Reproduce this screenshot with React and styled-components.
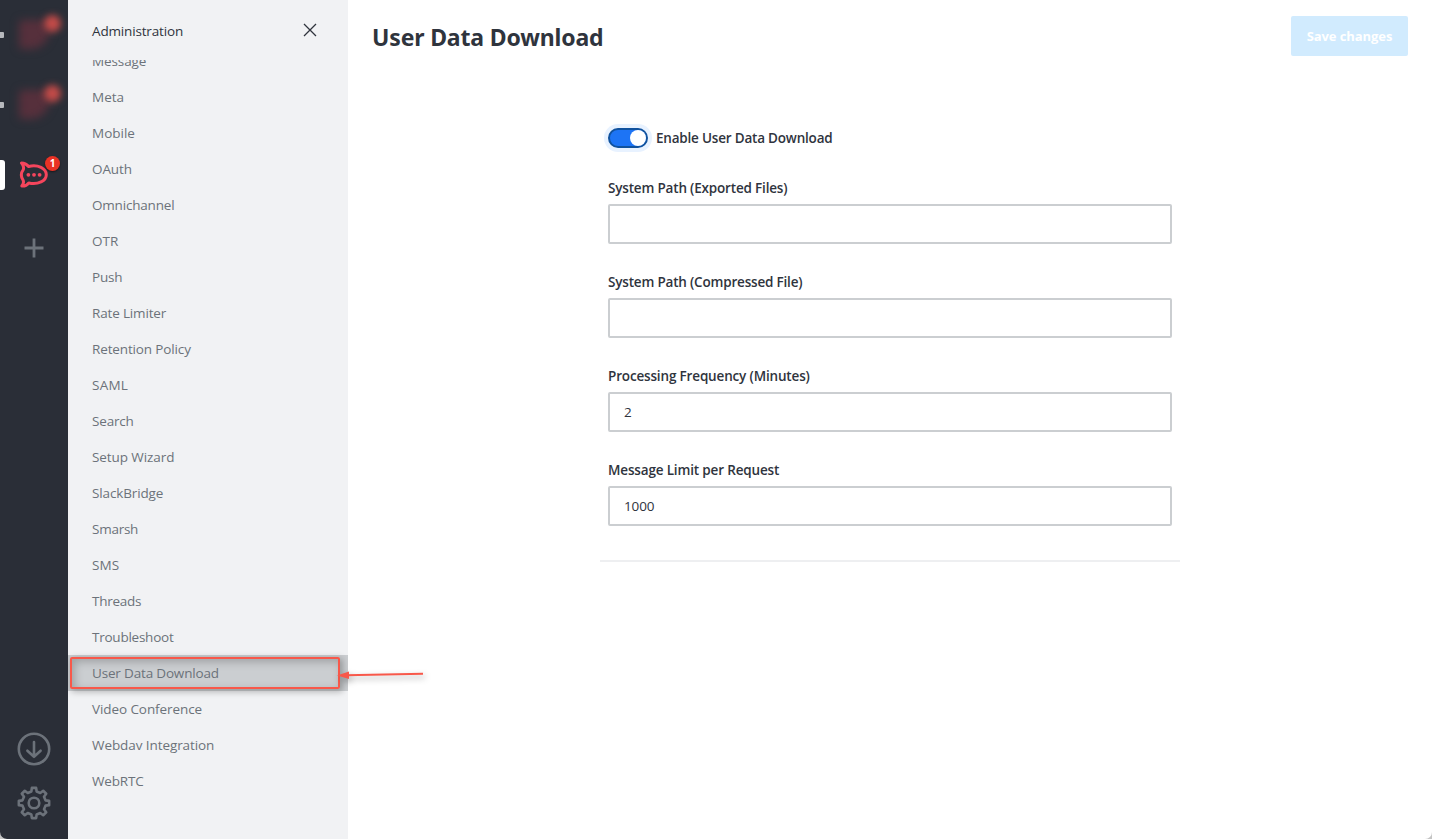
import React from 'react';
import styled, { createGlobalStyle } from 'styled-components';

const GlobalStyle = createGlobalStyle`
  *, *::before, *::after { box-sizing: border-box; }
  body { margin: 0; background: #c4c4c4; overflow: hidden; }
`;

const Window = styled.div`
  display: flex;
  width: 1432px;
  height: 839px;
  overflow: hidden;
  position: relative;
  border-radius: 0 0 7px 7px;
  background: #fff;
  font-family: 'Open Sans', 'Noto Sans', sans-serif;
  font-size: 13.5px;
  color: #2f343d;
`;

const Rail = styled.nav`
  display: flex;
  flex-direction: column;
  width: 68px;
  flex: none;
  background: #2a2e37;
`;

const Server = styled.div`
  position: relative;
  display: flex;
  align-items: center;
  justify-content: center;
  height: 70px;
`;

const Marker = styled.span`
  position: absolute;
  left: 0;
  top: ${(p) => (p.$active ? '20px' : '32px')};
  width: ${(p) => (p.$active ? '5px' : '4px')};
  height: ${(p) => (p.$active ? '30px' : '6px')};
  border-radius: ${(p) => (p.$active ? '0 3px 3px 0' : '0 1px 1px 0')};
  background: ${(p) => (p.$active ? '#fff' : '#b6b8bc')};
`;

const BlurredLogo = styled.span`
  position: absolute;
  left: 19px;
  top: 20px;
  width: 31px;
  height: 29px;
  border-radius: 4px 8px 20px 4px;
  background: #56303c;
  filter: blur(4px);
`;

const BlurredBadge = styled.span`
  position: absolute;
  left: 44px;
  top: 15px;
  width: 17px;
  height: 17px;
  border-radius: 50%;
  background: #c44b48;
  filter: blur(3.5px);
`;

const Badge = styled.span`
  position: absolute;
  left: 45px;
  top: 16px;
  width: 15px;
  height: 15px;
  border-radius: 50%;
  background: #e93225;
  color: #fff;
  font-size: 10px;
  font-weight: 700;
  line-height: 15px;
  text-align: center;
  box-shadow: 0 1px 2px rgba(0, 0, 0, 0.5);
`;

const RailButton = styled.button`
  display: flex;
  align-items: center;
  justify-content: center;
  width: 68px;
  height: 54px;
  padding: 0;
  border: 0;
  background: none;
  color: #6c727a;
`;

const AddButton = styled(RailButton)`
  height: 76px;
`;

const RailFooter = styled.div`
  display: flex;
  flex-direction: column;
  margin-top: auto;
  padding-bottom: 9px;
`;

const Sidebar = styled.aside`
  display: flex;
  flex-direction: column;
  width: 280px;
  flex: none;
  background: #f1f2f4;
`;

const SidebarHeader = styled.header`
  display: flex;
  align-items: center;
  justify-content: space-between;
  height: 60px;
  flex: none;
  padding: 2px 30px 0 24px;
`;

const Text = styled.span`
  letter-spacing: ${(p) => p.$spacing || 0}px;
  white-space: nowrap;
`;

const CloseButton = styled.button`
  display: flex;
  padding: 0;
  margin-top: -2px;
  border: 0;
  background: none;
  color: #2f343d;
`;

const ListViewport = styled.div`
  flex: 1;
  min-height: 0;
  overflow: hidden;
`;

const List = styled.ul`
  margin: -17px 0 0;
  padding: 0;
  list-style: none;
`;

const Item = styled.li`
  position: relative;
  display: flex;
  align-items: center;
  height: 36px;
  padding: 0 24px;
  color: #6c727a;
  background: ${(p) => (p.$selected ? '#cbced1' : 'transparent')};
`;

const Highlight = styled.span`
  position: absolute;
  left: 2px;
  top: 2px;
  width: 270px;
  height: 32px;
  border: 2px solid #f8584a;
  border-radius: 2px;
  box-shadow: 2px 2px 6px 1px rgba(0, 0, 0, 0.25), inset 3px 3px 8px rgba(0, 0, 0, 0.22);
`;

const Arrow = styled.svg`
  position: absolute;
  left: 336px;
  top: 660px;
  filter: drop-shadow(2px 3px 3px rgba(0, 0, 0, 0.35));
`;

const Main = styled.main`
  flex: 1;
  display: flex;
  flex-direction: column;
`;

const PageHeader = styled.header`
  display: flex;
  align-items: flex-start;
  justify-content: space-between;
  height: 124px;
  padding: 16px 24px 0;
`;

const Title = styled.h1`
  margin: 5px 0 0;
  font-family: 'Noto Sans', sans-serif;
  font-size: 23px;
  line-height: 32px;
  font-weight: 700;
  letter-spacing: ${(p) => p.$spacing}px;
  white-space: nowrap;
`;

const SaveButton = styled.button`
  width: 117px;
  height: 40px;
  padding: 0;
  border: 0;
  border-radius: 2px;
  background: #d1ebfe;
  color: #fff;
  font: 700 13px/20px 'Open Sans', sans-serif;
  letter-spacing: -0.07px;
  white-space: nowrap;
`;

const Form = styled.form`
  width: 580px;
  height: 438px;
  align-self: center;
  padding: 0 8px;
  border-bottom: 2px solid #eeeff1;
`;

const ToggleRow = styled.div`
  display: flex;
  align-items: center;
  gap: 8px;
  height: 28px;
  margin-bottom: 26px;
  font-weight: 600;
`;

const Toggle = styled.span`
  display: flex;
  justify-content: flex-end;
  align-items: center;
  width: 40px;
  height: 20px;
  border-radius: 10px;
  border: 2px solid #10529e;
  background: #1d74f5;
  box-shadow: 0 0 0 4px #e8f2ff;
`;

const Knob = styled.span`
  width: 16px;
  height: 16px;
  border-radius: 50%;
  background: #fff;
`;

const Field = styled.div`
  display: flex;
  flex-direction: column;
  height: 94px;
`;

const Label = styled.label`
  height: 26px;
  line-height: 20px;
  font-weight: 600;
`;

const Input = styled.div`
  display: flex;
  align-items: center;
  height: 40px;
  padding: 0 14px;
  border: 2px solid #cbced1;
  border-radius: 2px;
`;

const items = [
  ['Message', -0.1], ['Meta', 0], ['Mobile', 0], ['OAuth', -0.1], ['Omnichannel', -0.19],
  ['OTR', 0], ['Push', -0.2], ['Rate Limiter', -0.16], ['Retention Policy', -0.14],
  ['SAML', 0.25], ['Search', -0.17], ['Setup Wizard', -0.08], ['SlackBridge', -0.14],
  ['Smarsh', -0.25], ['SMS', 0.1], ['Threads', -0.25], ['Troubleshoot', -0.24],
  ['User Data Download', -0.17], ['Video Conference', -0.08],
  ['Webdav Integration', -0.08], ['WebRTC', -0.17],
];

const fields = [
  ['System Path (Exported Files)', '', -0.18],
  ['System Path (Compressed File)', '', -0.19],
  ['Processing Frequency (Minutes)', '2', -0.16],
  ['Message Limit per Request', '1000', -0.16],
];

const gearPoints = Array.from({ length: 8 }, (_, i) =>
  [[-13, 11.8], [-8, 15.3], [8, 15.3], [13, 11.8]].map(([a, r]) => {
    const t = ((i * 45 + a) * Math.PI) / 180;
    return `${(17 + r * Math.sin(t)).toFixed(2)},${(17 - r * Math.cos(t)).toFixed(2)}`;
  }).join(' ')
).join(' ');

const RocketLogo = () => (
  <svg width="30" height="28" viewBox="0 0 30 28" fill="none" stroke="#f5455c">
    <path d="M2.5 2C5.8 2 8 3.600 9.600 5.500C19 3.200 27.300 7.500 27.300 13.700C27.300 19.800 19 24 9.800 22C8 24.200 5.600 25.300 2.800 25C4.700 22.800 5 21 4 19C2 15.900 2 11.700 4.300 8.700C5 6.300 4.600 4.300 2.500 2Z" strokeWidth="3" strokeLinejoin="round" />
    <g fill="#f5455c" stroke="none">
      <circle cx="9.4" cy="13.8" r="1.9" /><circle cx="15" cy="13.8" r="1.9" /><circle cx="20.6" cy="13.8" r="1.9" />
    </g>
  </svg>
);

export default function App() {
  return (
    <>
      <GlobalStyle />
      <Window>
        <Rail>
          <Server><Marker /><BlurredLogo /><BlurredBadge /></Server>
          <Server><Marker /><BlurredLogo /><BlurredBadge /></Server>
          <Server><Marker $active /><RocketLogo /><Badge>1</Badge></Server>
          <AddButton aria-label="Add server">
            <svg width="20" height="20" stroke="currentColor" strokeWidth="2.8"><path d="M10 .5V19.5M.5 10H19.5" /></svg>
          </AddButton>
          <RailFooter>
            <RailButton aria-label="Downloads">
              <svg width="34" height="34" fill="none" stroke="currentColor" strokeWidth="2.6" strokeLinecap="round" strokeLinejoin="round">
                <circle cx="17" cy="17" r="15.2" /><path d="M17 10V24.800M10.400 18.700L17 24.800L23.600 18.700" />
              </svg>
            </RailButton>
            <RailButton aria-label="Settings">
              <svg width="34" height="34" fill="none" stroke="currentColor" strokeWidth="2.6" strokeLinejoin="round">
                <polygon points={gearPoints} /><circle cx="17" cy="17" r="5.3" />
              </svg>
            </RailButton>
          </RailFooter>
        </Rail>
        <Sidebar>
          <SidebarHeader>
            <Text $spacing={-0.16}>Administration</Text>
            <CloseButton aria-label="Close">
              <svg width="16" height="16" stroke="currentColor" strokeWidth="1.3"><path d="M2 2L14 14M14 2L2 14" /></svg>
            </CloseButton>
          </SidebarHeader>
          <ListViewport>
            <List>
              {items.map(([name, spacing]) => {
                const selected = name === 'User Data Download';
                return (
                  <Item key={name} $selected={selected}>
                    {selected && <Highlight />}
                    <Text $spacing={spacing}>{name}</Text>
                  </Item>
                );
              })}
            </List>
          </ListViewport>
        </Sidebar>
        <Main>
          <PageHeader>
            <Title $spacing={-0.15}>User Data Download</Title>
            <SaveButton>Save changes</SaveButton>
          </PageHeader>
          <Form>
            <ToggleRow><Toggle><Knob /></Toggle><Text $spacing={-0.2}>Enable User Data Download</Text></ToggleRow>
            {fields.map(([label, value, spacing]) => (
              <Field key={label}>
                <Label><Text $spacing={spacing}>{label}</Text></Label>
                <Input><Text $spacing={-0.1}>{value}</Text></Input>
              </Field>
            ))}
          </Form>
        </Main>
        <Arrow width="96" height="30">
          <path d="M10 15.2L87 13.8" stroke="#f8584a" strokeWidth="2" />
          <path d="M1 15.5L13 11.5V19Z" fill="#f8584a" />
        </Arrow>
      </Window>
    </>
  );
}
